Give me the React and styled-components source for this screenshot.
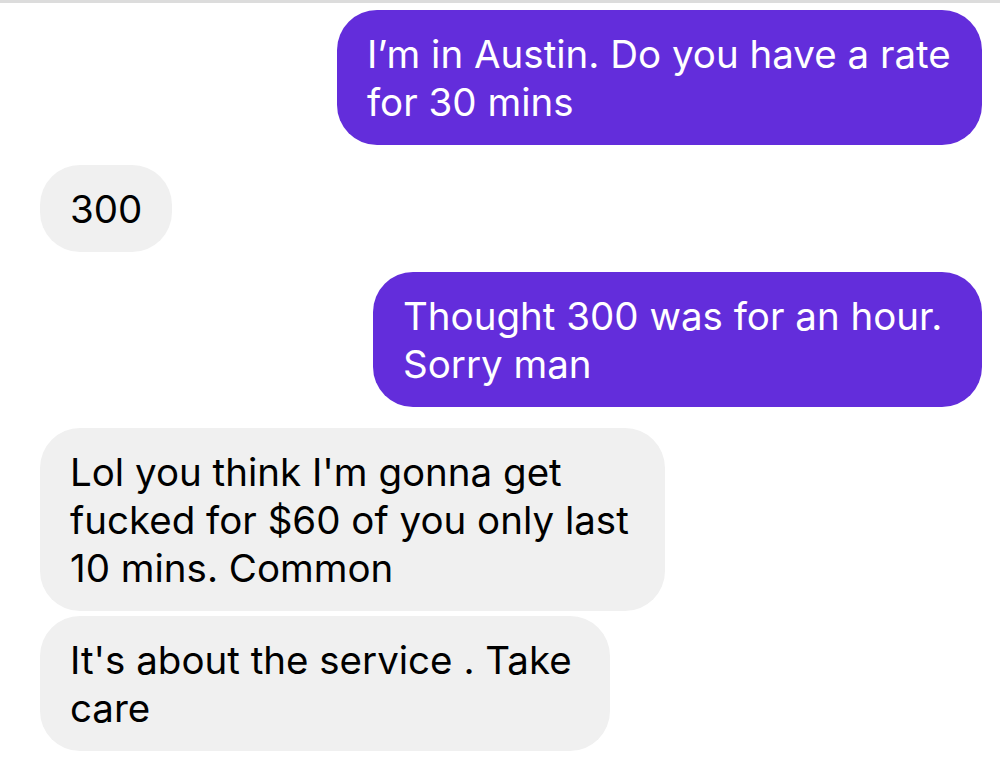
import React from "react";
import styled, { createGlobalStyle } from "styled-components";

const Global = createGlobalStyle`
  html, body { margin: 0; padding: 0; background: #fff; }
  body { font-family: Inter, "Noto Sans", sans-serif; }
`;

const Screen = styled.div`
  width: 1000px;
  height: 760px;
  box-sizing: border-box;
  border-top: 3px solid #dcdcdc;
  padding: 7px 18px 0 40px;
  display: flex;
  flex-direction: column;
  background: #fff;
  overflow: hidden;
`;

const Row = styled.div`
  display: flex;
  justify-content: ${(p) => (p.$mine ? "flex-end" : "flex-start")};
  margin-top: ${(p) => p.$gap}px;
`;

const Bubble = styled.div`
  box-sizing: border-box;
  width: ${(p) => (p.$w ? `${p.$w}px` : "auto")};
  background: ${(p) => (p.$mine ? "#632ddb" : "#f0f0f0")};
  color: ${(p) => (p.$mine ? "#ffffff" : "#000000")};
  border-radius: 40px;
  padding: 20px 30px 19px 30px;
  font-family: Inter, "Noto Sans", sans-serif;
  font-size: 38.5px;
  line-height: 48px;
  letter-spacing: 0;
  white-space: nowrap;
`;

const messages = [
  { mine: true, lines: ["I’m in Austin. Do you have a rate", "for 30 mins"], gap: 0, w: 645 },
  { mine: false, lines: ["300"], gap: 20 },
  { mine: true, lines: ["Thought 300 was for an hour.", "Sorry man"], gap: 20, w: 609 },
  {
    mine: false,
    lines: ["Lol you think I'm gonna get", "fucked for $60 of you only last", "10 mins. Common"],
    gap: 21,
    w: 625,
  },
  { mine: false, lines: ["It's about the service . Take", "care"], gap: 5, w: 570 },
];

export default function App() {
  return (
    <>
      <Global />
      <Screen>
        {messages.map((m, i) => (
          <Row key={i} $mine={m.mine} $gap={m.gap}>
            <Bubble $mine={m.mine} $w={m.w}>
              {m.lines.map((l, j) => (
                <React.Fragment key={j}>
                  {j > 0 && <br />}
                  {l}
                </React.Fragment>
              ))}
            </Bubble>
          </Row>
        ))}
      </Screen>
    </>
  );
}
